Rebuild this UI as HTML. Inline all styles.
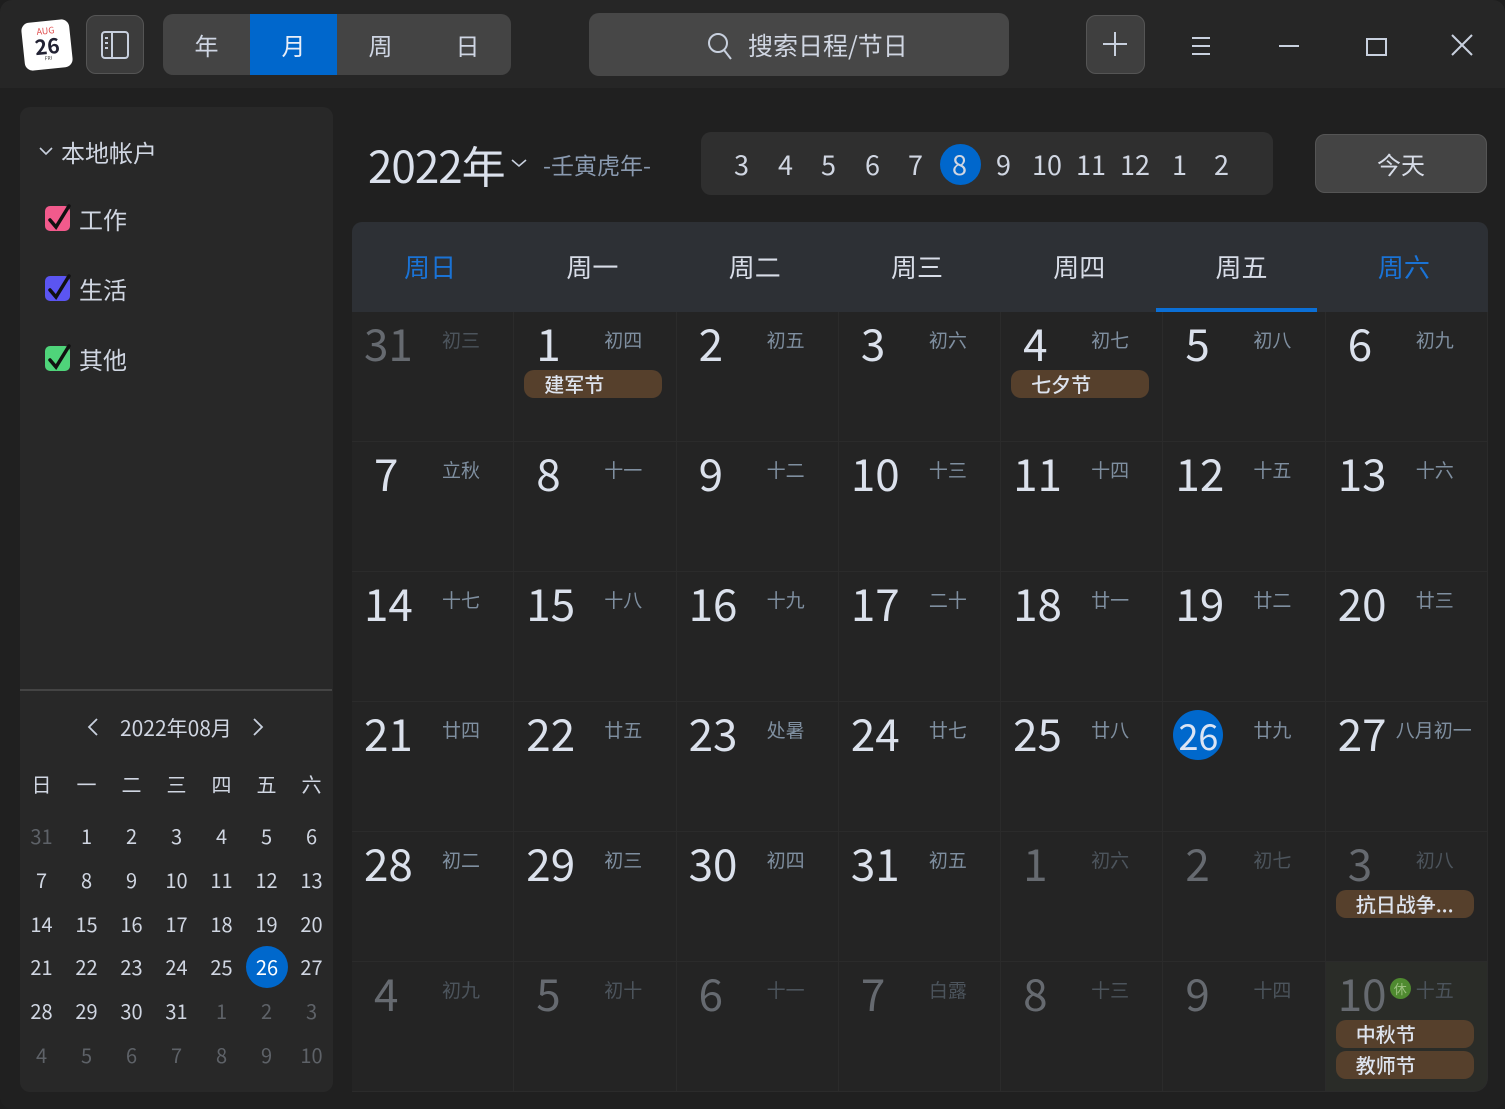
<!DOCTYPE html>
<html><head><meta charset="utf-8"><style>
*{margin:0;padding:0;box-sizing:border-box}
body{width:1505px;height:1109px;background:#1e1e1e;font-family:"Noto Sans CJK SC","Liberation Sans",sans-serif;color:#d8dde8;overflow:hidden;position:relative}
.win{position:absolute;left:0;top:0;width:1505px;height:1109px;background:#202020;border-radius:12px;overflow:hidden}
.top{position:absolute;left:0;top:0;width:1505px;height:88px;background:#262626}
.abs{position:absolute}
.btn{position:absolute;background:#444;border-radius:10px}
.seg{position:absolute;left:163px;top:14px;width:348px;height:61px;background:#444;border-radius:10px;overflow:hidden;display:flex}
.seg div{width:87px;height:61px;line-height:61px;text-align:center;font-size:24px;color:#cfd6e4}
.seg .on{background:#0067cc;color:#e8eef8}
.side{position:absolute;left:20px;top:107px;width:313px;height:985px;background:#282828;border-radius:10px}
.cb{position:absolute;width:25px;height:25px;border-radius:5px}
.lab{position:absolute;font-size:24px;line-height:34px;color:#d0d6e2}
.grid{position:absolute;left:352px;top:312px;width:1136px;height:780px;display:grid;grid-template-columns:repeat(7,1fr);grid-template-rows:repeat(6,130px)}
.c{position:relative;background:#242424;border-right:1px solid #2b2b2b;border-bottom:1px solid #2b2b2b}
.n{position:absolute;left:12px;top:-2px;font-size:44px;line-height:64px;color:#dbe1ec}
.l{position:absolute;left:90px;top:14px;font-size:19px;line-height:28px;color:#7f8fa0}
.o .n{color:#666a70}.o .l{color:#4c545c}
.ev{position:absolute;left:10px;top:58px;width:138px;height:28px;border-radius:10px;background:#56402c;font-size:20px;line-height:28px;padding-left:20px;color:#dde3ee;font-weight:500}
.hd{position:absolute;left:352px;top:222px;width:1136px;height:90px;background:#2d3035;border-radius:10px 10px 0 0;display:flex}
.hd div{flex:1;text-align:center;line-height:90px;font-size:26px;color:#d8dde8;padding-right:6px}
.mg{display:grid;grid-template-columns:repeat(7,45px);text-align:center}
.g{color:#5e6268}
</style></head><body><div class="win">
<div class="top"></div>
<div class="abs" style="left:23px;top:21px;width:48px;height:48px;background:#fff;border-radius:8px;transform:rotate(-6deg);text-align:center">
<div style="font-size:9px;color:#e05050;line-height:10px;margin-top:5px">AUG</div>
<div style="font-size:21px;font-weight:bold;color:#223;line-height:20px">26</div>
<div style="font-size:5px;color:#333;line-height:6px">FRI</div></div>
<div class="btn" style="left:86px;top:15px;width:58px;height:59px;border:1px solid #555;background:#3c3c3c"></div>
<svg class="abs" style="left:101px;top:31px" width="28" height="28" viewBox="0 0 28 28" fill="none" stroke="#c8d0de" stroke-width="2"><rect x="1" y="1" width="26" height="26" rx="3"/><line x1="11" y1="1" x2="11" y2="27"/><line x1="4" y1="7" x2="7" y2="7"/><line x1="4" y1="12" x2="7" y2="12"/><line x1="4" y1="17" x2="7" y2="17"/></svg>
<div class="seg"><div>年</div><div class="on">月</div><div>周</div><div>日</div></div>
<div class="btn" style="left:589px;top:13px;width:420px;height:63px;background:#474747"></div>
<svg class="abs" style="left:706px;top:31px" width="28" height="30" viewBox="0 0 28 30" fill="none" stroke="#c8d0de" stroke-width="2"><circle cx="12" cy="12" r="9"/><line x1="18" y1="19" x2="25" y2="28"/></svg>
<div class="abs" style="left:748px;top:27px;font-size:25px;line-height:36px;color:#d0d6e2">搜索日程/节日</div>
<div class="btn" style="left:1086px;top:15px;width:59px;height:59px;border:1px solid #555;background:#3f3f3f"></div>
<svg class="abs" style="left:1102px;top:31px" width="26" height="26" stroke="#c8d0de" stroke-width="2"><line x1="13" y1="1" x2="13" y2="25"/><line x1="1" y1="13" x2="25" y2="13"/></svg>
<svg class="abs" style="left:1190px;top:35px" width="22" height="22" stroke="#c8d0de" stroke-width="2"><line x1="2" y1="3" x2="20" y2="3"/><line x1="2" y1="11" x2="20" y2="11"/><line x1="2" y1="19" x2="20" y2="19"/></svg>
<svg class="abs" style="left:1278px;top:36px" width="22" height="22" stroke="#c8d0de" stroke-width="2"><line x1="1" y1="10" x2="21" y2="10"/></svg>
<svg class="abs" style="left:1366px;top:36px" width="22" height="22" fill="none" stroke="#c8d0de" stroke-width="2"><rect x="1" y="3" width="19" height="16"/></svg>
<svg class="abs" style="left:1451px;top:34px" width="22" height="22" stroke="#c8d0de" stroke-width="2"><line x1="1" y1="1" x2="21" y2="21"/><line x1="21" y1="1" x2="1" y2="21"/></svg>

<div class="side"></div>
<svg class="abs" style="left:39px;top:146px" width="14" height="10" fill="none" stroke="#c8d0de" stroke-width="1.6"><polyline points="1,2 7,8 13,2"/></svg>
<div class="lab" style="left:61px;top:135px">本地帐户</div>
<div class="cb" style="left:45px;top:206px;background:#f25a8c"></div>
<div class="cb" style="left:45px;top:276px;background:#5b55f2"></div>
<div class="cb" style="left:45px;top:346px;background:#4fd47a"></div>
<svg class="abs" style="left:44px;top:200px" width="30" height="180" fill="none" stroke="#111" stroke-width="3.5" stroke-linecap="round"><polyline points="6,20 12,27 25,6"/><polyline points="6,90 12,97 25,76"/><polyline points="6,160 12,167 25,146"/></svg>
<div class="lab" style="left:79px;top:202px">工作</div>
<div class="lab" style="left:79px;top:272px">生活</div>
<div class="lab" style="left:79px;top:342px">其他</div>
<div class="abs" style="left:20px;top:689px;width:312px;height:2px;background:#444"></div>
<svg class="abs" style="left:87px;top:718px" width="12" height="18" fill="none" stroke="#c8d0de" stroke-width="1.8"><polyline points="10,1 2,9 10,17"/></svg>
<div class="abs" style="left:120px;top:713px;font-size:21px;line-height:30px;color:#d0d6e2">2022年08月</div>
<svg class="abs" style="left:252px;top:718px" width="12" height="18" fill="none" stroke="#c8d0de" stroke-width="1.8"><polyline points="2,1 10,9 2,17"/></svg>
<div class="abs mg" style="left:19px;top:767px;font-size:20px;line-height:34px;color:#d0d6e2">
<div>日</div><div>一</div><div>二</div><div>三</div><div>四</div><div>五</div><div>六</div></div>
<div class="abs mg" style="left:19px;top:814px;font-size:20px;color:#d0d6e2;line-height:44px;grid-auto-rows:43.8px">
<div class="g">31</div><div>1</div><div>2</div><div>3</div><div>4</div><div>5</div><div>6</div>
<div>7</div><div>8</div><div>9</div><div>10</div><div>11</div><div>12</div><div>13</div>
<div>14</div><div>15</div><div>16</div><div>17</div><div>18</div><div>19</div><div>20</div>
<div>21</div><div>22</div><div>23</div><div>24</div><div>25</div><div style="position:relative"><span style="position:absolute;left:2px;top:1px;width:42px;height:42px;border-radius:50%;background:#0068cc;color:#fff;line-height:42px">26</span></div><div>27</div>
<div>28</div><div>29</div><div>30</div><div>31</div><div class="g">1</div><div class="g">2</div><div class="g">3</div>
<div class="g">4</div><div class="g">5</div><div class="g">6</div><div class="g">7</div><div class="g">8</div><div class="g">9</div><div class="g">10</div>
</div>

<div class="abs" style="left:368px;top:134px;font-size:44px;line-height:60px;color:#dbe1ec;letter-spacing:-1px">2022年</div>
<svg class="abs" style="left:511px;top:158px" width="16" height="10" fill="none" stroke="#c8d0de" stroke-width="1.6"><polyline points="1,2 8,8 15,2"/></svg>
<div class="abs" style="left:543px;top:148px;font-size:23px;line-height:32px;color:#8a9ab0">-壬寅虎年-</div>
<div class="abs" style="left:701px;top:132px;width:572px;height:63px;background:#2f2f2f;border-radius:10px"></div>
<div class="abs" style="left:940px;top:144px;width:41px;height:41px;border-radius:50%;background:#0067cc"></div>
<div class="abs" style="left:728px;top:145px;font-size:27px;line-height:38px;color:#d0d6e2">
<span style="position:absolute;left:6px">3</span><span style="position:absolute;left:50px">4</span><span style="position:absolute;left:93px">5</span><span style="position:absolute;left:137px">6</span><span style="position:absolute;left:180px">7</span><span style="position:absolute;left:224px">8</span><span style="position:absolute;left:268px">9</span><span style="position:absolute;left:304px">10</span><span style="position:absolute;left:348px">11</span><span style="position:absolute;left:392px">12</span><span style="position:absolute;left:444px">1</span><span style="position:absolute;left:486px">2</span></div>
<div class="abs" style="left:1315px;top:134px;width:172px;height:59px;background:#444;border:1px solid #555;border-radius:10px;text-align:center;line-height:57px;font-size:24px;color:#d8dde8">今天</div>

<div class="hd"><div style="color:#1a73d6">周日</div><div>周一</div><div>周二</div><div>周三</div><div>周四</div><div>周五</div><div style="color:#1a73d6">周六</div></div>
<div class="abs" style="left:1156px;top:308px;width:161px;height:4px;background:#0b6fd6"></div>

<div class="grid">
<div class="c o"><div class="n">31</div><div class="l">初三</div></div>
<div class="c"><div class="n" style="left:22px">1</div><div class="l">初四</div><div class="ev">建军节</div></div>
<div class="c"><div class="n" style="left:22px">2</div><div class="l">初五</div></div>
<div class="c"><div class="n" style="left:22px">3</div><div class="l">初六</div></div>
<div class="c"><div class="n" style="left:22px">4</div><div class="l">初七</div><div class="ev">七夕节</div></div>
<div class="c"><div class="n" style="left:22px">5</div><div class="l">初八</div></div>
<div class="c"><div class="n" style="left:22px">6</div><div class="l">初九</div></div>

<div class="c"><div class="n" style="left:22px">7</div><div class="l">立秋</div></div>
<div class="c"><div class="n" style="left:22px">8</div><div class="l">十一</div></div>
<div class="c"><div class="n" style="left:22px">9</div><div class="l">十二</div></div>
<div class="c"><div class="n">10</div><div class="l">十三</div></div>
<div class="c"><div class="n">11</div><div class="l">十四</div></div>
<div class="c"><div class="n">12</div><div class="l">十五</div></div>
<div class="c"><div class="n">13</div><div class="l">十六</div></div>

<div class="c"><div class="n">14</div><div class="l">十七</div></div>
<div class="c"><div class="n">15</div><div class="l">十八</div></div>
<div class="c"><div class="n">16</div><div class="l">十九</div></div>
<div class="c"><div class="n">17</div><div class="l">二十</div></div>
<div class="c"><div class="n">18</div><div class="l">廿一</div></div>
<div class="c"><div class="n">19</div><div class="l">廿二</div></div>
<div class="c"><div class="n">20</div><div class="l">廿三</div></div>

<div class="c"><div class="n">21</div><div class="l">廿四</div></div>
<div class="c"><div class="n">22</div><div class="l">廿五</div></div>
<div class="c"><div class="n">23</div><div class="l">处暑</div></div>
<div class="c"><div class="n">24</div><div class="l">廿七</div></div>
<div class="c"><div class="n">25</div><div class="l">廿八</div></div>
<div class="c"><div class="n" style="left:10px;top:8px;width:50px;height:50px;border-radius:50%;background:#0068cc;font-size:36px;line-height:50px;text-align:center;color:#dbe4f4">26</div><div class="l">廿九</div></div>
<div class="c"><div class="n">27</div><div class="l" style="left:70px">八月初一</div></div>

<div class="c"><div class="n">28</div><div class="l">初二</div></div>
<div class="c"><div class="n">29</div><div class="l">初三</div></div>
<div class="c"><div class="n">30</div><div class="l">初四</div></div>
<div class="c"><div class="n">31</div><div class="l">初五</div></div>
<div class="c o"><div class="n" style="left:22px">1</div><div class="l">初六</div></div>
<div class="c o"><div class="n" style="left:22px">2</div><div class="l">初七</div></div>
<div class="c o"><div class="n" style="left:22px">3</div><div class="l">初八</div><div class="ev">抗日战争...</div></div>

<div class="c o"><div class="n" style="left:22px">4</div><div class="l">初九</div></div>
<div class="c o"><div class="n" style="left:22px">5</div><div class="l">初十</div></div>
<div class="c o"><div class="n" style="left:22px">6</div><div class="l">十一</div></div>
<div class="c o"><div class="n" style="left:22px">7</div><div class="l">白露</div></div>
<div class="c o"><div class="n" style="left:22px">8</div><div class="l">十三</div></div>
<div class="c o"><div class="n" style="left:22px">9</div><div class="l">十四</div></div>
<div class="c o" style="background:#2a2c28;border-radius:0 0 14px 0"><div class="n">10</div><div style="position:absolute;left:64px;top:16px;width:21px;height:21px;border-radius:50%;background:#4f8a30;font-size:13px;line-height:21px;text-align:center;color:#9cc080">休</div><div class="l">十五</div><div class="ev">中秋节</div><div class="ev" style="top:89px">教师节</div></div>
</div>
</div></body></html>
